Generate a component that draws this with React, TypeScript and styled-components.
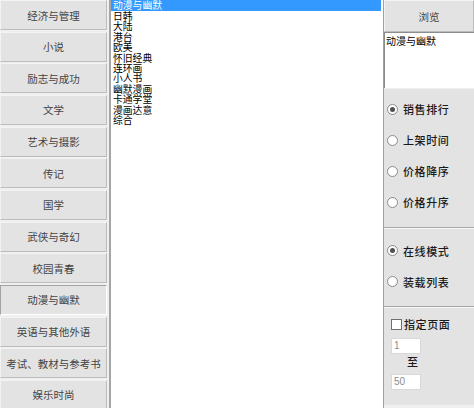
import styled, { createGlobalStyle } from 'styled-components';

const categories = [
  '经济与管理',
  '小说',
  '励志与成功',
  '文学',
  '艺术与摄影',
  '传记',
  '国学',
  '武侠与奇幻',
  '校园青春',
  '动漫与幽默',
  '英语与其他外语',
  '考试、教材与参考书',
  '娱乐时尚',
];

const subItems = [
  '动漫与幽默',
  '日韩',
  '大陆',
  '港台',
  '欧美',
  '怀旧经典',
  '连环画',
  '小人书',
  '幽默漫画',
  '卡通学堂',
  '漫画达意',
  '综合',
];

const sortOptions = [
  { label: '销售排行', checked: true },
  { label: '上架时间', checked: false },
  { label: '价格降序', checked: false },
  { label: '价格升序', checked: false },
];

const modeOptions = [
  { label: '在线模式', checked: true },
  { label: '装载列表', checked: false },
];

const selectedCategory = '动漫与幽默';

const App = () => (
  <>
    <GlobalStyle />
    <Window>
      <CategoryColumn>
        {categories.map((name) => (
          <CategoryButton key={name} active={name === selectedCategory}>
            {name}
          </CategoryButton>
        ))}
      </CategoryColumn>
      <ListBox>
        {subItems.map((item, index) => (
          <ListItem key={item} selected={index === 0}>
            {item}
          </ListItem>
        ))}
      </ListBox>
      <SidePanel>
        <BrowseButton>浏览</BrowseButton>
        <PathBox>{selectedCategory}</PathBox>
        <OptionsPanel>
          <Group>
            {sortOptions.map((opt) => (
              <OptionRow key={opt.label}>
                <Radio checked={opt.checked} />
                <OptionLabel>{opt.label}</OptionLabel>
              </OptionRow>
            ))}
          </Group>
          <Divider />
          <Group second>
            {modeOptions.map((opt) => (
              <OptionRow key={opt.label}>
                <Radio checked={opt.checked} />
                <OptionLabel>{opt.label}</OptionLabel>
              </OptionRow>
            ))}
          </Group>
          <Divider />
          <PageRange>
            <CheckRow>
              <CheckBox />
              <OptionLabel>指定页面</OptionLabel>
            </CheckRow>
            <PageInput>1</PageInput>
            <ToLabel>至</ToLabel>
            <PageInput>50</PageInput>
          </PageRange>
        </OptionsPanel>
      </SidePanel>
    </Window>
  </>
);

export default App;

const GlobalStyle = createGlobalStyle`
  html, body {
    margin: 0;
    padding: 0;
    background: #f0f0f0;
  }
  * {
    box-sizing: border-box;
  }
`;

const Window = styled.div`
  display: flex;
  width: 474px;
  height: 408px;
  overflow: hidden;
  background: #f0f0f0;
  font-family: 'Noto Sans CJK SC', 'Noto Sans', sans-serif;
`;

const CategoryColumn = styled.div`
  display: flex;
  flex-direction: column;
  gap: 1.67px;
  width: 107px;
  flex-shrink: 0;
`;

interface ActiveProps {
  active: boolean;
}

const CategoryButton = styled.div<ActiveProps>`
  flex-shrink: 0;
  height: 30px;
  display: flex;
  align-items: center;
  justify-content: center;
  background: #e3e3e3;
  border: 1px solid;
  border-color: ${({ active }) =>
    active ? '#a3a3a3 #ffffff #ffffff #a3a3a3' : '#f3f3f3 #bcbcbc #bcbcbc #f3f3f3'};
  color: #444444;
  font-size: 10.5px;
  white-space: nowrap;
`;

const ListBox = styled.div`
  margin-left: 2px;
  width: 274px;
  flex-shrink: 0;
  height: 100%;
  background: #ffffff;
  border-left: 2px solid #a5a5a5;
  padding-right: 2px;
`;

interface SelectedProps {
  selected: boolean;
}

const ListItem = styled.div<SelectedProps>`
  height: ${({ selected }) => (selected ? '11px' : '10.4px')};
  line-height: 10.4px;
  padding-left: 2px;
  font-size: 9.8px;
  white-space: nowrap;
  color: ${({ selected }) => (selected ? '#ffffff' : '#000000')};
  background: ${({ selected }) => (selected ? '#3399ff' : 'transparent')};
`;

const SidePanel = styled.div`
  flex: 1;
  display: flex;
  flex-direction: column;
  border-left: 1px solid #a0a0a0;
  height: 100%;
`;

const BrowseButton = styled.div`
  height: 32px;
  display: flex;
  align-items: center;
  justify-content: center;
  background: #e3e3e3;
  border: 1px solid;
  border-color: #f3f3f3 #bcbcbc #bcbcbc #f3f3f3;
  font-size: 10.5px;
  color: #444444;
`;

const PathBox = styled.div`
  height: 56px;
  background: #ffffff;
  border-top: 1px solid #8c8c8c;
  border-left: 1px solid #8c8c8c;
  padding: 2px 1px;
  font-size: 10px;
  line-height: 12px;
  color: #000;
  white-space: nowrap;
`;

const OptionsPanel = styled.div`
  margin-top: 1px;
  height: 316px;
  background: #e3e3e3;
  display: flex;
  flex-direction: column;
`;

const Group = styled.div<{ second?: boolean }>`
  display: flex;
  flex-direction: column;
  padding-top: ${({ second }) => (second ? '6.5px' : '4.5px')};
`;

const OptionRow = styled.div`
  height: 31px;
  display: flex;
  align-items: center;
  padding-left: 3px;
`;

const Radio = styled.span<{ checked: boolean }>`
  width: 11px;
  height: 11px;
  border-radius: 50%;
  border: 1px solid #8a8a8a;
  background: #ffffff;
  display: flex;
  align-items: center;
  justify-content: center;
  margin-right: 5px;

  &::after {
    content: '';
    width: 5px;
    height: 5px;
    border-radius: 50%;
    background: ${({ checked }) => (checked ? '#505050' : 'transparent')};
  }
`;

const OptionLabel = styled.span`
  font-size: 11px;
  letter-spacing: 0.6px;
  font-weight: 500;
  color: #1a1a1a;
  white-space: nowrap;
`;

const Divider = styled.div`
  margin-top: 9px;
  height: 2px;
  border-top: 1px solid #a8a8a8;
  border-bottom: 1px solid #f6f6f6;
`;

const PageRange = styled.div`
  display: flex;
  flex-direction: column;
  padding: 9px 0 0 7px;
`;

const CheckRow = styled.div`
  display: flex;
  align-items: center;
  height: 14px;
`;

const CheckBox = styled.span`
  width: 11px;
  height: 11px;
  border: 1px solid #6f6f6f;
  background: #ffffff;
  margin-right: 2px;
`;

const PageInput = styled.div`
  margin-top: 7px;
  width: 30px;
  height: 16px;
  background: #ffffff;
  border: 1px solid #d8d8d8;
  font-size: 10px;
  line-height: 14px;
  padding-left: 2px;
  color: #8c8c8c;
  font-family: 'Liberation Sans', sans-serif;
`;

const ToLabel = styled.div`
  margin-top: 1px;
  padding-left: 16px;
  height: 12px;
  line-height: 12px;
  font-size: 11px;
  font-weight: 500;
  color: #1a1a1a;
`;
